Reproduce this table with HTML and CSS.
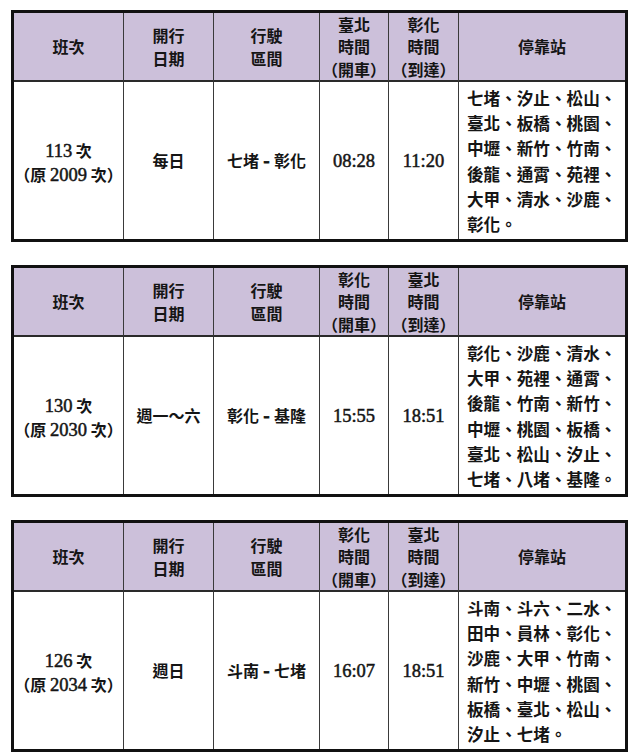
FILE: index.html
```html
<!DOCTYPE html>
<html lang="zh-Hant">
<head>
<meta charset="utf-8">
<title>班次時刻表</title>
<link rel="stylesheet" href="styles.css">
</head>
<body>
<div class="page">

<table class="sched">
  <colgroup>
    <col class="c1"><col class="c2"><col class="c3"><col class="c4"><col class="c5"><col class="c6">
  </colgroup>
  <thead>
    <tr>
      <th>班次</th>
      <th>開行<br>日期</th>
      <th>行駛<br>區間</th>
      <th>臺北<br>時間<br>（開車）</th>
      <th>彰化<br>時間<br>（到達）</th>
      <th class="last">停靠站</th>
    </tr>
  </thead>
  <tbody>
    <tr>
      <td class="train"><span class="num">113</span> 次<br>（原 <span class="num">2009</span> 次）</td>
      <td>每日</td>
      <td>七堵<span class="dash"> - </span>彰化</td>
      <td><span class="num">08:28</span></td>
      <td><span class="num">11:20</span></td>
      <td class="stops last">七堵、汐止、松山、<br>臺北、板橋、桃園、<br>中壢、新竹、竹南、<br>後龍、通霄、苑裡、<br>大甲、清水、沙鹿、<br>彰化。</td>
    </tr>
  </tbody>
</table>

<table class="sched">
  <colgroup>
    <col class="c1"><col class="c2"><col class="c3"><col class="c4"><col class="c5"><col class="c6">
  </colgroup>
  <thead>
    <tr>
      <th>班次</th>
      <th>開行<br>日期</th>
      <th>行駛<br>區間</th>
      <th>彰化<br>時間<br>（開車）</th>
      <th>臺北<br>時間<br>（到達）</th>
      <th class="last">停靠站</th>
    </tr>
  </thead>
  <tbody>
    <tr>
      <td class="train"><span class="num">130</span> 次<br>（原 <span class="num">2030</span> 次）</td>
      <td>週一～六</td>
      <td>彰化<span class="dash"> - </span>基隆</td>
      <td><span class="num">15:55</span></td>
      <td><span class="num">18:51</span></td>
      <td class="stops last">彰化、沙鹿、清水、<br>大甲、苑裡、通霄、<br>後龍、竹南、新竹、<br>中壢、桃園、板橋、<br>臺北、松山、汐止、<br>七堵、八堵、基隆。</td>
    </tr>
  </tbody>
</table>

<table class="sched">
  <colgroup>
    <col class="c1"><col class="c2"><col class="c3"><col class="c4"><col class="c5"><col class="c6">
  </colgroup>
  <thead>
    <tr>
      <th>班次</th>
      <th>開行<br>日期</th>
      <th>行駛<br>區間</th>
      <th>彰化<br>時間<br>（開車）</th>
      <th>臺北<br>時間<br>（到達）</th>
      <th class="last">停靠站</th>
    </tr>
  </thead>
  <tbody>
    <tr>
      <td class="train"><span class="num">126</span> 次<br>（原 <span class="num">2034</span> 次）</td>
      <td>週日</td>
      <td>斗南<span class="dash"> - </span>七堵</td>
      <td><span class="num">16:07</span></td>
      <td><span class="num">18:51</span></td>
      <td class="stops last">斗南、斗六、二水、<br>田中、員林、彰化、<br>沙鹿、大甲、竹南、<br>新竹、中壢、桃園、<br>板橋、臺北、松山、<br>汐止、七堵。</td>
    </tr>
  </tbody>
</table>

</div>
</body>
</html>
```

FILE: styles.css
```css
html, body {
  margin: 0;
  padding: 0;
  background: #ffffff;
}

.page {
  display: flex;
  flex-direction: column;
  gap: 23px;
  padding: 10px 0 0 11px;
}

.sched {
  width: 617px;
  table-layout: fixed;
  border-collapse: separate;
  border-spacing: 0;
  border: 3px solid #111111;
  font-family: "Noto Sans CJK TC", "Liberation Serif", serif;
  font-size: 16px;
  font-weight: 700;
  color: #151515;
}

.c1 { width: 110px; }
.c2 { width: 90px; }
.c3 { width: 106px; }
.c4 { width: 69px; }
.c5 { width: 70px; }
.c6 { width: 166px; }

.sched th,
.sched td {
  padding: 0;
  text-align: center;
  vertical-align: middle;
  border-right: 1px solid #3a3a3a;
}

.sched th.last,
.sched td.last {
  border-right: none;
}

.sched th {
  height: 67px;
  background: #ccc0da;
  line-height: 22.3px;
  font-weight: 700;
  border-bottom: 2px solid #2a2a2a;
}

.sched td {
  height: 155px;
  line-height: 23px;
}

.sched td.train {
  padding-top: 4px;
  height: 151px;
}

.num {
  font-family: "Liberation Serif", serif;
  font-weight: 400;
  font-size: 18.5px;
  -webkit-text-stroke: 0.5px #151515;
}

.dash {
  font-family: "Liberation Serif", serif;
  font-size: 18px;
  -webkit-text-stroke: 0.8px #151515;
}

.sched td.stops {
  text-align: left;
  padding: 2px 0 0 8px;
  font-size: 16.6px;
  line-height: 25.3px;
  white-space: nowrap;
}
```
